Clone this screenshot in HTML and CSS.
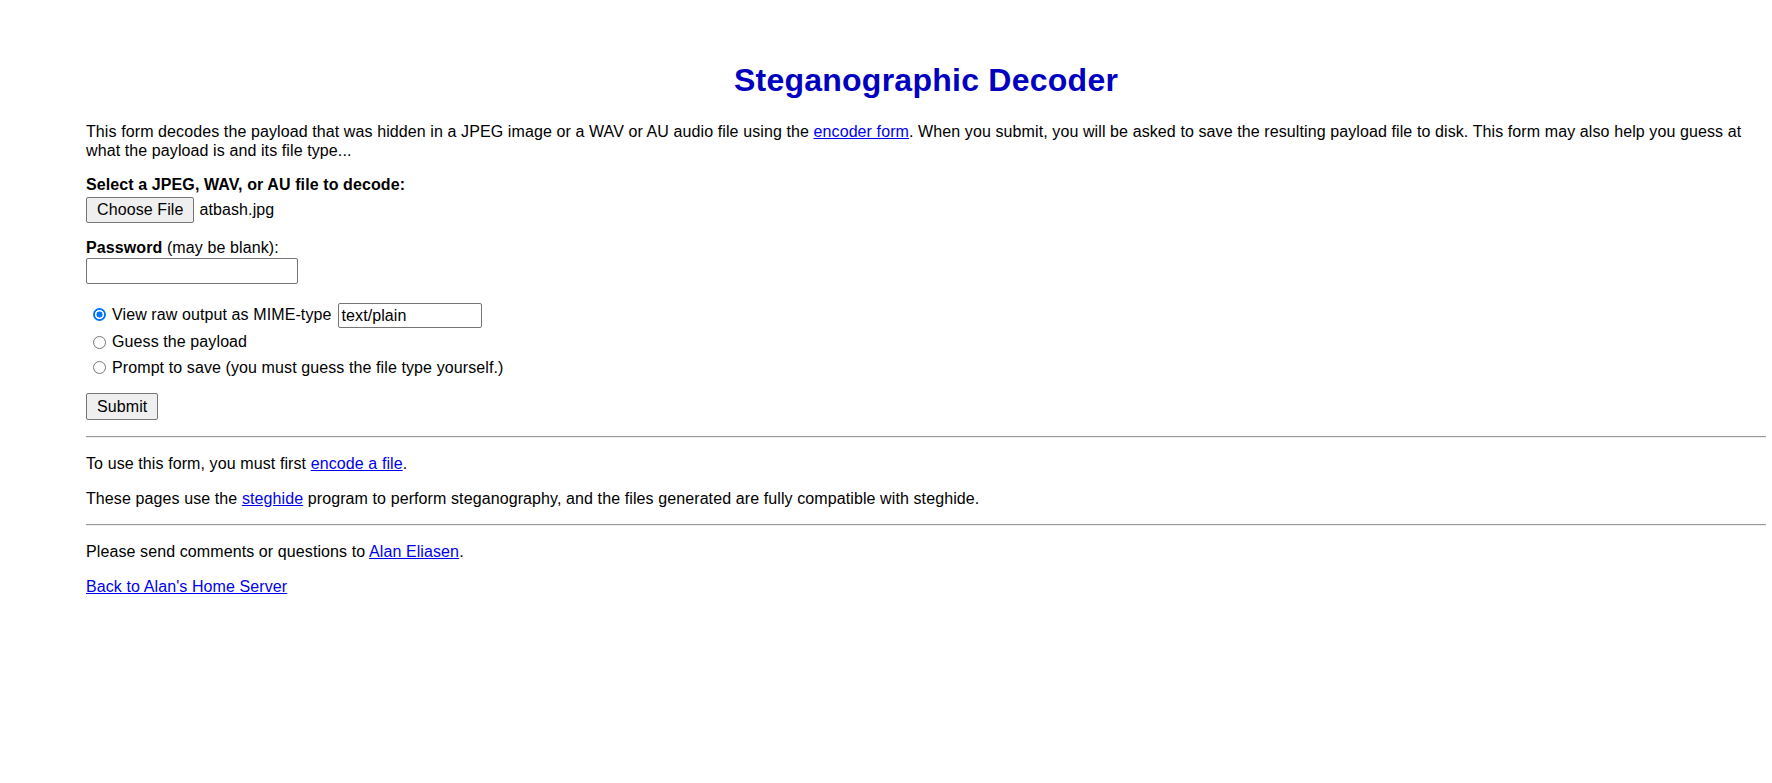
FILE: index.html
```html
<!DOCTYPE html>
<html lang="en">
<head>
<meta charset="utf-8">
<title>Steganographic Decoder</title>
<link rel="stylesheet" href="styles.css">
</head>
<body>
<h1 class="title">Steganographic Decoder</h1>
<p class="intro">This form decodes the payload that was hidden in a JPEG image or a WAV or AU audio file using the <a href="#">encoder form</a>. When you submit, you will be asked to save the resulting payload file to disk. This form may also help you guess at what the payload is and its file type...</p>
<form class="decoder">
  <div class="label-file"><b>Select a JPEG, WAV, or AU file to decode:</b></div>
  <div class="file-row">
    <button type="button" class="btn">Choose File</button>
    <span class="file-name">atbash.jpg</span>
  </div>
  <div class="label-pass"><b>Password</b> (may be blank):</div>
  <input type="password" class="pass-input">
  <div class="options">
    <label class="opt opt-first"><input type="radio" name="mode" class="radio radio-first" checked><span class="opt-text-first">View raw output as MIME-type</span><input type="text" class="mime-input" value="text/plain"></label>
    <label class="opt"><input type="radio" name="mode" class="radio"><span>Guess the payload</span></label>
    <label class="opt"><input type="radio" name="mode" class="radio"><span>Prompt to save (you must guess the file type yourself.)</span></label>
  </div>
  <div class="submit-row"><button type="button" class="btn btn-submit">Submit</button></div>
</form>
<hr class="rule">
<p class="note">To use this form, you must first <a href="#">encode a file</a>.</p>
<p class="note">These pages use the <a href="#">steghide</a> program to perform steganography, and the files generated are fully compatible with steghide.</p>
<hr class="rule">
<p class="note">Please send comments or questions to <a href="#">Alan Eliasen</a>.</p>
<p class="note"><a href="#">Back to Alan's Home Server</a></p>
</body>
</html>
```
FILE: styles.css
```css
html, body {
  background: #ffffff;
}
body {
  margin: 0;
  padding: 0 6px 0 86px;
  font-family: "Liberation Sans", Arial, sans-serif;
  font-size: 16px;
  letter-spacing: 0.1px;
  color: #000000;
}
a {
  color: #0000ee;
  text-decoration: underline;
}
.title {
  margin: 62px 0 24px;
  font-size: 32px;
  line-height: 37px;
  font-weight: bold;
  letter-spacing: 0.25px;
  color: #0000c0;
  text-align: center;
}
.intro {
  margin: 0;
  line-height: 18.8px;
}
.decoder {
  margin: 0;
}
.label-file {
  margin-top: 15.5px;
  line-height: 18.4px;
}
.file-row {
  display: flex;
  align-items: center;
  margin-top: 2px;
  height: 26px;
}
.btn {
  font-family: "Liberation Sans", Arial, sans-serif;
  font-size: 16px;
  letter-spacing: 0.1px;
  color: #000000;
  background: #efefef;
  border: 1px solid #767676;
  border-radius: 2px;
  padding: 0 10px;
  height: 26px;
  margin: 0;
}
.file-name {
  margin-left: 5px;
}
.label-pass {
  margin-top: 16.5px;
  line-height: 18.4px;
}
.pass-input {
  display: block;
  box-sizing: border-box;
  width: 212px;
  height: 26px;
  margin: 1px 0 0;
  padding: 1px 2px;
  border: 1px solid #767676;
  border-radius: 2px;
  font-family: "Liberation Sans", Arial, sans-serif;
  font-size: 16px;
}
.options {
  margin-top: 18px;
  display: flex;
  flex-direction: column;
}
.opt {
  display: flex;
  align-items: center;
  height: 25.6px;
}
.opt-first {
  height: 27px;
}
.opt-text-first {
  margin-bottom: 1px;
}
.radio {
  appearance: none;
  -webkit-appearance: none;
  box-sizing: border-box;
  width: 13px;
  height: 13px;
  margin: 0 6px 0 7px;
  border: 1px solid #767676;
  border-radius: 50%;
  background: #ffffff;
  flex: none;
}
.radio:checked {
  border: 0;
  background: radial-gradient(circle, #0075ff 0 2.8px, #ffffff 3.3px 4.3px, #0075ff 4.8px);
}
.radio-first {
  margin-bottom: 3px;
}
.mime-input {
  box-sizing: border-box;
  width: 144px;
  height: 25px;
  margin: 0 0 0 7px;
  padding: 1px 2px;
  border: 1px solid #767676;
  border-radius: 2px;
  font-family: "Liberation Sans", Arial, sans-serif;
  font-size: 16px;
  letter-spacing: 0.1px;
  color: #000000;
}
.submit-row {
  margin: 12.5px 0 15.5px;
}
.btn-submit {
  height: 27px;
}
.rule {
  margin: 0;
  height: 0;
  border: 0;
  border-top: 1px solid #9a9a9a;
  border-bottom: 1px solid #eeeeee;
}
.note {
  margin: 16px 0;
  line-height: 19.2px;
}
```
